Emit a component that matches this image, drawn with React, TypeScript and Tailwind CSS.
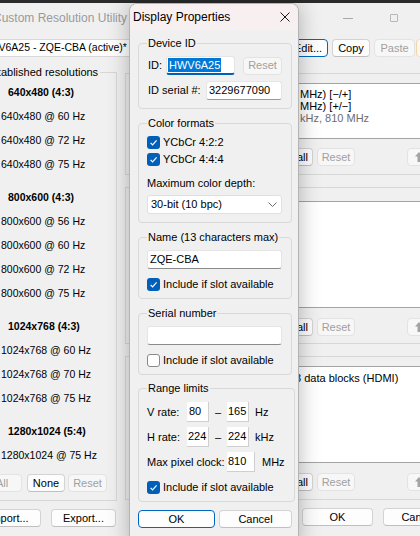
import React from 'react'

function Check({ checked }: { checked: boolean }) {
  if (!checked) {
    return <span className="h-[13px] w-[13px] shrink-0 rounded-[3px] border border-[#8a8a8a] bg-white" />
  }
  return (
    <span className="flex h-[13px] w-[13px] shrink-0 items-center justify-center rounded-[3px] bg-[#005fb8]">
      <svg width="11" height="11" viewBox="0 0 11 11">
        <path d="M2.6 5.8 L4.6 7.8 L8.6 3.4" fill="none" stroke="white" strokeWidth="1.2" />
      </svg>
    </span>
  )
}

function Btn({
  children,
  className = '',
  disabled = false,
  primary = false,
}: {
  children?: React.ReactNode
  className?: string
  disabled?: boolean
  primary?: boolean
}) {
  const look = disabled
    ? 'border-[#e3e3e3] bg-[#f7f7f7] text-[#a0a0a0]'
    : primary
      ? 'border-[#0067c0] bg-[#fdfdfd] text-black'
      : 'border-[#d3d3d3] border-b-[#bfbfbf] bg-[#fdfdfd] text-black'
  return (
    <div
      className={`flex h-[18px] shrink-0 items-center justify-center whitespace-nowrap rounded-[4px] border ${look} ${className}`}
    >
      {children}
    </div>
  )
}

function UpArrow() {
  return (
    <svg width="8" height="10" viewBox="0 0 8 10">
      <path d="M4 0 L8 4.5 H5.5 V10 H2.5 V4.5 H0 Z" fill="#a3a3a3" />
    </svg>
  )
}

function DownArrow() {
  return (
    <svg width="8" height="10" viewBox="0 0 8 10">
      <path d="M4 10 L8 5.5 H5.5 V0 H2.5 V5.5 H0 Z" fill="#a3a3a3" />
    </svg>
  )
}

const sections = [
  { head: '640x480 (4:3)', items: ['640x480 @ 60 Hz', '640x480 @ 72 Hz', '640x480 @ 75 Hz'] },
  { head: '800x600 (4:3)', items: ['800x600 @ 56 Hz', '800x600 @ 60 Hz', '800x600 @ 72 Hz', '800x600 @ 75 Hz'] },
  { head: '1024x768 (4:3)', items: ['1024x768 @ 60 Hz', '1024x768 @ 70 Hz', '1024x768 @ 75 Hz'] },
  { head: '1280x1024 (5:4)', items: ['1280x1024 @ 75 Hz'] },
]

// buttons under each list in the right column (the rest sit behind the dialog)
function ListButtons({ className = '' }: { className?: string }) {
  return (
    <div className={`flex items-center gap-[4px] pl-[131px] ${className}`}>
      <Btn className="w-[56px]">Delete all</Btn>
      <Btn className="w-[38px]" disabled>
        Reset
      </Btn>
      <Btn className="ml-[48px] w-[24px]" disabled>
        <UpArrow />
      </Btn>
      <Btn className="w-[24px]" disabled>
        <DownArrow />
      </Btn>
    </div>
  )
}

export default function App() {
  return (
    <div className="relative h-[536px] w-[420px] overflow-hidden bg-[#f0f0f0] font-['Liberation_Sans',Arial,sans-serif] text-[11px] text-black">
      <div className="h-[3px] bg-[#2b2b2b]" />

      {/* main window title bar */}
      <div className="flex h-[30px] items-center">
        <span className="-ml-[7px] whitespace-nowrap text-[12px] text-[#9a9a9a]">Custom Resolution Utility</span>
        <div className="ml-auto mr-[22px] flex items-center gap-[37px]">
          <span className="h-px w-[10px] bg-[#a8a8a8]" />
          <span className="h-[8px] w-[8px] rounded-[1px] border border-[#b8b8b8]" />
        </div>
      </div>

      {/* display picker row */}
      <div className="mt-[6px] flex h-[18px] whitespace-nowrap">
        <div className="-ml-[4px] flex w-[138px] shrink-0 items-center overflow-hidden rounded-[3px] border border-[#d9d9d9] bg-white">
          <span className="-ml-[16px] text-[10.5px]">HWV6A25 - ZQE-CBA (active)*</span>
        </div>
        <Btn primary className="ml-[154px] w-[40px]">
          Edit...
        </Btn>
        <Btn className="ml-[4px] w-[38px]">Copy</Btn>
        <Btn disabled className="ml-[4px] w-[41px]">
          Paste
        </Btn>
        <Btn disabled className="ml-[1px] w-[44px] border-l-[#f3d5a5]">
          Import
        </Btn>
      </div>

      <div className="flex">
        {/* established resolutions */}
        <div className="w-[117px] shrink-0">
          <div className="mt-[8px] flex h-[14px] items-center">
            <span className="-ml-[15px] whitespace-nowrap pr-[2px]">Established resolutions</span>
            <div className="h-[7px] flex-1 self-end border-r border-t border-[#d7d7d7]" />
          </div>
          <div className="border-b border-r border-[#d7d7d7] pb-[8px] pt-[2px] text-[10.5px]">
            {sections.map((s, i) => (
              <div key={s.head} className={i > 0 ? 'mt-[9px]' : ''}>
                <div className="flex h-[24px] items-center pl-[8px] font-bold">{s.head}</div>
                {s.items.map((it) => (
                  <div key={it} className="flex h-[24px] items-center whitespace-nowrap pl-[1px]">
                    {it}
                  </div>
                ))}
              </div>
            ))}
            <div className="mt-[6px] flex text-[11px]">
              <Btn disabled className="-ml-[18px] w-[40px]">
                All
              </Btn>
              <Btn className="ml-[5px] w-[38px]">None</Btn>
              <Btn disabled className="ml-[3px] w-[39px]">
                Reset
              </Btn>
            </div>
          </div>
          <div className="mt-[8px] flex">
            <Btn className="-ml-[24px] w-[65px]">Import...</Btn>
            <Btn className="ml-[10px] w-[65px]">Export...</Btn>
          </div>
        </div>

        {/* detailed resolutions / extension blocks */}
        <div className="ml-[8px] w-[340px] shrink-0">
          <div className="mt-[16px] border-b border-l border-t border-[#d7d7d7] pb-[8px] pt-[9px]">
            <div className="ml-[7px] h-[56px] border-y border-[#a3a3a3] bg-white pl-[167px] pt-[4px] leading-[12px]">
              <div>MHz) [−/+]</div>
              <div>MHz) [+/−]</div>
              <div className="text-[#6d6d6d]">kHz, 810 MHz</div>
            </div>
            <ListButtons className="mt-[9px]" />
          </div>

          <div className="mt-[12px] border-b border-l border-t border-[#d7d7d7] pb-[7px] pt-[13px]">
            <div className="ml-[7px] h-[107px] border-y border-[#a3a3a3] bg-white" />
            <ListButtons className="mt-[10px]" />
          </div>

          <div className="mt-[12px] border-b border-l border-t border-[#d7d7d7] pb-[8px] pt-[9px]">
            <div className="ml-[7px] h-[97px] border-y border-[#a3a3a3] bg-white pl-[162px] pt-[5px] leading-[12px]">
              <div className="whitespace-nowrap">3 data blocks (HDMI)</div>
            </div>
            <ListButtons className="mt-[10px]" />
          </div>

          <div className="mt-[8px] flex">
            <Btn className="ml-[177px] w-[71px]">OK</Btn>
            <Btn className="ml-[10px] w-[71px]">Cancel</Btn>
          </div>
        </div>
      </div>

      {/* Display Properties dialog */}
      <div className="absolute left-[129px] top-[3px] h-[545px] w-[170px] rounded-t-[8px] border border-[#b4b4b4] bg-[#f0f0f0] shadow-[0_0_22px_rgba(0,0,0,0.28)]">
        <div className="flex h-[26px] items-center rounded-t-[7px] bg-[#f8eff1] pl-[3px] pr-[8px]">
          <span className="text-[12px]">Display Properties</span>
          <svg className="ml-auto" width="10" height="10" viewBox="0 0 10 10">
            <path d="M0.5 0.5 L9.5 9.5 M9.5 0.5 L0.5 9.5" stroke="#1a1a1a" strokeWidth="1" />
          </svg>
        </div>

        <div className="pl-[8px] pr-[6px]">
          <fieldset className="mt-[6px] rounded-[4px] border border-[#d9d9d9] pb-[8px] pl-[8px] pr-[9px] pt-[6px]">
            <legend className="px-[1px] leading-[14px]">Device ID</legend>
            <div className="flex h-[19px] items-center">
              <span className="w-[19px] pl-[1px]">ID:</span>
              <div className="flex h-[19px] w-[69px] items-center rounded-[3px] border border-b-2 border-[#e5e5e5] border-b-[#005fb8] bg-white pl-[1px]">
                <span className="bg-[#0078d7] px-[1px] leading-[14px] text-white">HWV6A25</span>
              </div>
              <Btn disabled className="ml-[8px] h-[17px] w-[39px]">
                Reset
              </Btn>
            </div>
            <div className="mt-[6px] flex h-[19px] items-center">
              <span className="w-[59px] pl-[1px]">ID serial #:</span>
              <div className="flex h-[19px] w-[76px] items-center rounded-[3px] border border-[#e5e5e5] border-b-[#9a9a9a] bg-white pl-[2px]">
                3229677090
              </div>
            </div>
          </fieldset>

          <fieldset className="mt-[7px] rounded-[4px] border border-[#d9d9d9] pb-[8px] pl-[8px] pr-[9px] pt-[4px]">
            <legend className="px-[1px] leading-[14px]">Color formats</legend>
            <div className="flex h-[17px] items-center gap-[3px]">
              <Check checked />
              <span>YCbCr 4:2:2</span>
            </div>
            <div className="flex h-[17px] items-center gap-[3px]">
              <Check checked />
              <span>YCbCr 4:4:4</span>
            </div>
            <div className="mt-[8px] leading-[14px]">Maximum color depth:</div>
            <div className="mt-[5px] flex h-[19px] items-center justify-between rounded-[3px] border border-[#e0e0e0] bg-white pl-[3px] pr-[4px]">
              <span>30-bit (10 bpc)</span>
              <svg width="9" height="5" viewBox="0 0 9 5">
                <path d="M0.5 0.5 L4.5 4.5 L8.5 0.5" fill="none" stroke="#6b6b6b" strokeWidth="1" />
              </svg>
            </div>
          </fieldset>

          <fieldset className="mt-[7px] rounded-[4px] border border-[#d9d9d9] pb-[5px] pl-[8px] pr-[9px] pt-[6px]">
            <legend className="px-[1px] leading-[14px]">Name (13 characters max)</legend>
            <div className="flex h-[19px] items-center rounded-[3px] border border-[#e5e5e5] border-b-[#8a8a8a] bg-white pl-[2px]">
              ZQE-CBA
            </div>
            <div className="mt-[7px] flex h-[17px] items-center gap-[3px]">
              <Check checked />
              <span>Include if slot available</span>
            </div>
          </fieldset>

          <fieldset className="mt-[7px] rounded-[4px] border border-[#d9d9d9] pb-[5px] pl-[8px] pr-[9px] pt-[6px]">
            <legend className="px-[1px] leading-[14px]">Serial number</legend>
            <div className="h-[19px] rounded-[3px] border border-[#e5e5e5] border-b-[#8a8a8a] bg-white" />
            <div className="mt-[7px] flex h-[17px] items-center gap-[3px]">
              <Check checked={false} />
              <span>Include if slot available</span>
            </div>
          </fieldset>

          <fieldset className="mt-[6px] rounded-[4px] border border-[#d9d9d9] pb-[5px] pl-[8px] pr-[9px] pt-[7px]">
            <legend className="px-[1px] leading-[14px]">Range limits</legend>
            <div className="flex h-[20px] items-center">
              <span className="w-[40px]">V rate:</span>
              <div className="flex h-[20px] w-[22px] items-center border-b border-r border-[#cfcfcf] bg-white pl-[2px]">80</div>
              <span className="w-[18px] text-center">–</span>
              <div className="flex h-[20px] w-[22px] items-center border-b border-r border-[#cfcfcf] bg-white pl-[1px]">165</div>
              <span className="ml-[6px]">Hz</span>
            </div>
            <div className="mt-[5px] flex h-[20px] items-center">
              <span className="w-[40px]">H rate:</span>
              <div className="flex h-[20px] w-[22px] items-center border-b border-r border-[#cfcfcf] bg-white pl-[1px]">224</div>
              <span className="w-[18px] text-center">–</span>
              <div className="flex h-[20px] w-[22px] items-center border-b border-r border-[#cfcfcf] bg-white pl-[1px]">224</div>
              <span className="ml-[6px]">kHz</span>
            </div>
            <div className="mt-[5px] flex h-[20px] items-center">
              <span className="w-[80px] whitespace-nowrap">Max pixel clock:</span>
              <div className="flex h-[20px] w-[28px] items-center border-b border-r border-[#cfcfcf] bg-white pl-[1px]">810</div>
              <span className="ml-[7px]">MHz</span>
            </div>
            <div className="mt-[7px] flex h-[17px] items-center gap-[3px]">
              <Check checked />
              <span>Include if slot available</span>
            </div>
          </fieldset>

          <div className="mt-[8px] flex gap-[4px]">
            <Btn primary className="w-[77px]">
              OK
            </Btn>
            <Btn className="w-[73px]">Cancel</Btn>
          </div>
        </div>
      </div>
    </div>
  )
}
